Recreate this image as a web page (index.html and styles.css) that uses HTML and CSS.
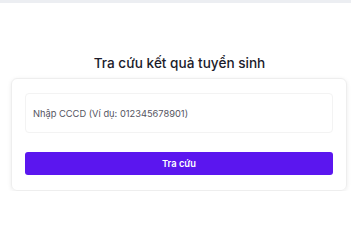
FILE: index.html
```html
<!DOCTYPE html>
<html lang="vi">
<head>
<meta charset="utf-8">
<title>Tra cứu kết quả tuyển sinh</title>
<link rel="stylesheet" href="styles.css">
</head>
<body>
<div class="topbar"></div>
<main class="page">
  <h1 class="title">Tra cứu kết quả tuyển sinh</h1>
  <form class="card">
    <input class="field" type="text" placeholder="Nhập CCCD (Ví dụ: 012345678901)">
    <button class="btn" type="button">Tra cứu</button>
  </form>
</main>
</body>
</html>
```
FILE: styles.css
```css
html, body {
  margin: 0;
  padding: 0;
  background: #ffffff;
  font-family: Inter, "Noto Sans", sans-serif;
}
.topbar {
  height: 3px;
  background: #eceef2;
}
.page {
  padding-top: 50px;
}
.title {
  margin: 0 0 5px 0;
  padding-left: 8px;
  text-align: center;
  font-size: 13.6px;
  line-height: 20px;
  font-weight: 500;
  color: #1b1b2a;
}
.card {
  margin: 0 0 0 11px;
  width: 336px;
  box-sizing: border-box;
  padding: 14px 13px 15px 13px;
  border: 1px solid #eeeeee;
  border-radius: 6px;
  box-shadow: 0 1px 4px rgba(0,0,0,0.08);
  display: flex;
  flex-direction: column;
  gap: 19px;
}
.field {
  height: 40px;
  box-sizing: border-box;
  border: 1px solid #f3f3f3;
  border-radius: 4px;
  padding: 0 7px;
  font-family: inherit;
  font-size: 9.3px;
  outline: none;
}
.field::placeholder {
  color: #55555f;
}
.btn {
  height: 23px;
  border: none;
  border-radius: 3px;
  background: #5b16ef;
  color: #ffffff;
  font-family: inherit;
  font-size: 9.3px;
  font-weight: 600;
  padding: 0;
}
```
